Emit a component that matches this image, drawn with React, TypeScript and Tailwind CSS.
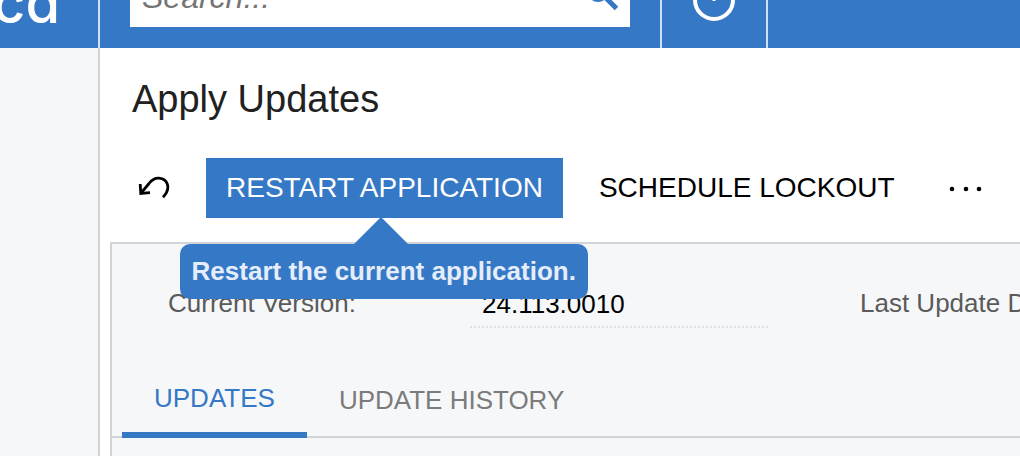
import type { ReactNode } from 'react';

function UndoIcon() {
  return (
    <svg className="h-8 w-8" viewBox="0 0 32 32" fill="none" stroke="currentColor" strokeWidth="2.8" aria-hidden="true">
      <path d="M2.6 21.6 L11 11.5 C14.5 7 17.5 6 21 6.2 C29 6.8 34 15.5 25 25.2" />
      <path d="M2.2 12 L2.8 21.5 L12 20.6" />
    </svg>
  );
}

function SearchIcon() {
  return (
    <svg className="absolute right-2 bottom-4 h-10 w-10" viewBox="0 0 40 40" fill="none" stroke="currentColor" strokeWidth="4" aria-hidden="true">
      <circle cx="16" cy="20" r="9" />
      <path d="M22 25 L34.5 37.5" strokeWidth="5" />
    </svg>
  );
}

function ClockIcon() {
  return (
    <svg className="h-12 w-12" viewBox="0 0 48 48" fill="none" stroke="currentColor" strokeWidth="4" aria-hidden="true">
      <circle cx="24" cy="24" r="19" />
      <path d="M24 11 V25" strokeWidth="3" />
    </svg>
  );
}

function MoreIcon() {
  return (
    <svg className="h-8 w-9" viewBox="0 0 36 32" fill="currentColor" aria-hidden="true">
      <circle cx="5" cy="17" r="2.3" />
      <circle cx="19" cy="17" r="2.3" />
      <circle cx="32" cy="17" r="2.3" />
    </svg>
  );
}

function Header() {
  return (
    <header className="flex h-12 shrink-0 items-end overflow-hidden bg-[#3578c6] text-white">
      <div className="flex h-20 w-[100px] shrink-0 items-end justify-end overflow-hidden border-r-2 border-[#cfe0f2] pr-[38px] pb-4">
        <a href="#home" className="font-['Inter',sans-serif] text-[56px] leading-[58px] font-medium [font-feature-settings:'cv11']">
          ca
        </a>
      </div>
      <div className="h-20 w-[562px] shrink-0 border-r-2 border-[#cfe0f2] px-[30px]">
        <div className="relative h-[59px] w-[500px] bg-white text-[#3578c6]">
          <input
            type="search"
            aria-label="Search"
            placeholder="Search..."
            className="h-full w-full px-3 text-[32px] text-black italic outline-none placeholder:text-[#757575]"
          />
          <SearchIcon />
        </div>
      </div>
      <div className="flex h-20 w-[106px] shrink-0 items-end justify-center border-r-2 border-[#cfe0f2] pb-6">
        <button type="button" aria-label="Business date">
          <ClockIcon />
        </button>
      </div>
    </header>
  );
}

function Toolbar() {
  return (
    <div className="flex h-[60px] items-center pl-[38px] text-[28px] whitespace-nowrap text-black">
      <button type="button" aria-label="Cancel" className="mr-9">
        <UndoIcon />
      </button>
      <div className="relative">
        <button type="button" aria-describedby="restart-tip" className="h-[60px] bg-[#3578c6] px-5 text-white">
          RESTART APPLICATION
        </button>
        <div
          id="restart-tip"
          role="tooltip"
          className="absolute top-[86px] right-[-25px] z-10 rounded-[10px] bg-[#3578c6] px-3 py-3 text-[26px] leading-[31px] font-bold text-[#e4edf9]"
        >
          <svg className="absolute bottom-full left-[174px] h-[27px] w-[54px] text-[#3578c6]" viewBox="0 0 54 27" fill="currentColor" aria-hidden="true">
            <path d="M27 0 L54 27 H0 Z" />
          </svg>
          Restart the current application.
        </div>
      </div>
      <button type="button" className="ml-9">
        SCHEDULE LOCKOUT
      </button>
      <button type="button" aria-label="More actions" className="ml-[52px]">
        <MoreIcon />
      </button>
    </div>
  );
}

function Tab({ active, children }: { active?: boolean; children: ReactNode }) {
  return (
    <button
      type="button"
      role="tab"
      aria-selected={!!active}
      className={
        active
          ? 'h-[78px] border-b-6 border-[#3578c6] px-8 pt-1 text-[#3578c6]'
          : 'h-[78px] border-b-2 border-transparent px-8 pt-1 text-[#7b7b7b]'
      }
    >
      {children}
    </button>
  );
}

function Details() {
  return (
    <section className="flex grow flex-col overflow-hidden border-t-2 border-l-2 border-[#d1d3d6] bg-[#f6f7f9] text-[26px]">
      <div className="flex h-[116px] items-end whitespace-nowrap pb-8 pl-14">
        <label htmlFor="version" className="w-[302px] shrink-0 pb-[5px] text-[#5a5a5a]">
          Current Version:
        </label>
        <input
          id="version"
          readOnly
          value="24.113.0010"
          className="h-12 w-[298px] shrink-0 border-b-2 border-dotted border-[#dde1e7] px-3 pt-0.5 text-black outline-none"
        />
        <label htmlFor="updated" className="ml-[92px] shrink-0 pb-[5px] text-[#5a5a5a]">
          Last Update Date:
        </label>
        <input id="updated" readOnly className="h-12 w-[298px] shrink-0 border-b-2 border-dotted border-[#dde1e7] px-3" />
      </div>
      <div role="tablist" className="flex h-[78px] border-b-2 border-[#d1d3d6] pl-[10px]">
        <Tab active>UPDATES</Tab>
        <Tab>UPDATE HISTORY</Tab>
      </div>
    </section>
  );
}

export default function App() {
  return (
    <div className="flex min-h-screen flex-col overflow-hidden bg-white font-['Liberation_Sans',Arial,sans-serif]">
      <Header />
      <div className="flex grow">
        <aside className="w-[100px] shrink-0 border-r-2 border-[#d1d3d6] bg-[#f6f7f9]" />
        <main className="flex min-w-0 grow flex-col">
          <h1 className="pt-[27px] pb-[35px] pl-8 text-[38px] leading-[48px] text-[#212121]">Apply Updates</h1>
          <Toolbar />
          <div className="flex grow flex-col pt-6 pl-[10px]">
            <Details />
          </div>
        </main>
      </div>
    </div>
  );
}
